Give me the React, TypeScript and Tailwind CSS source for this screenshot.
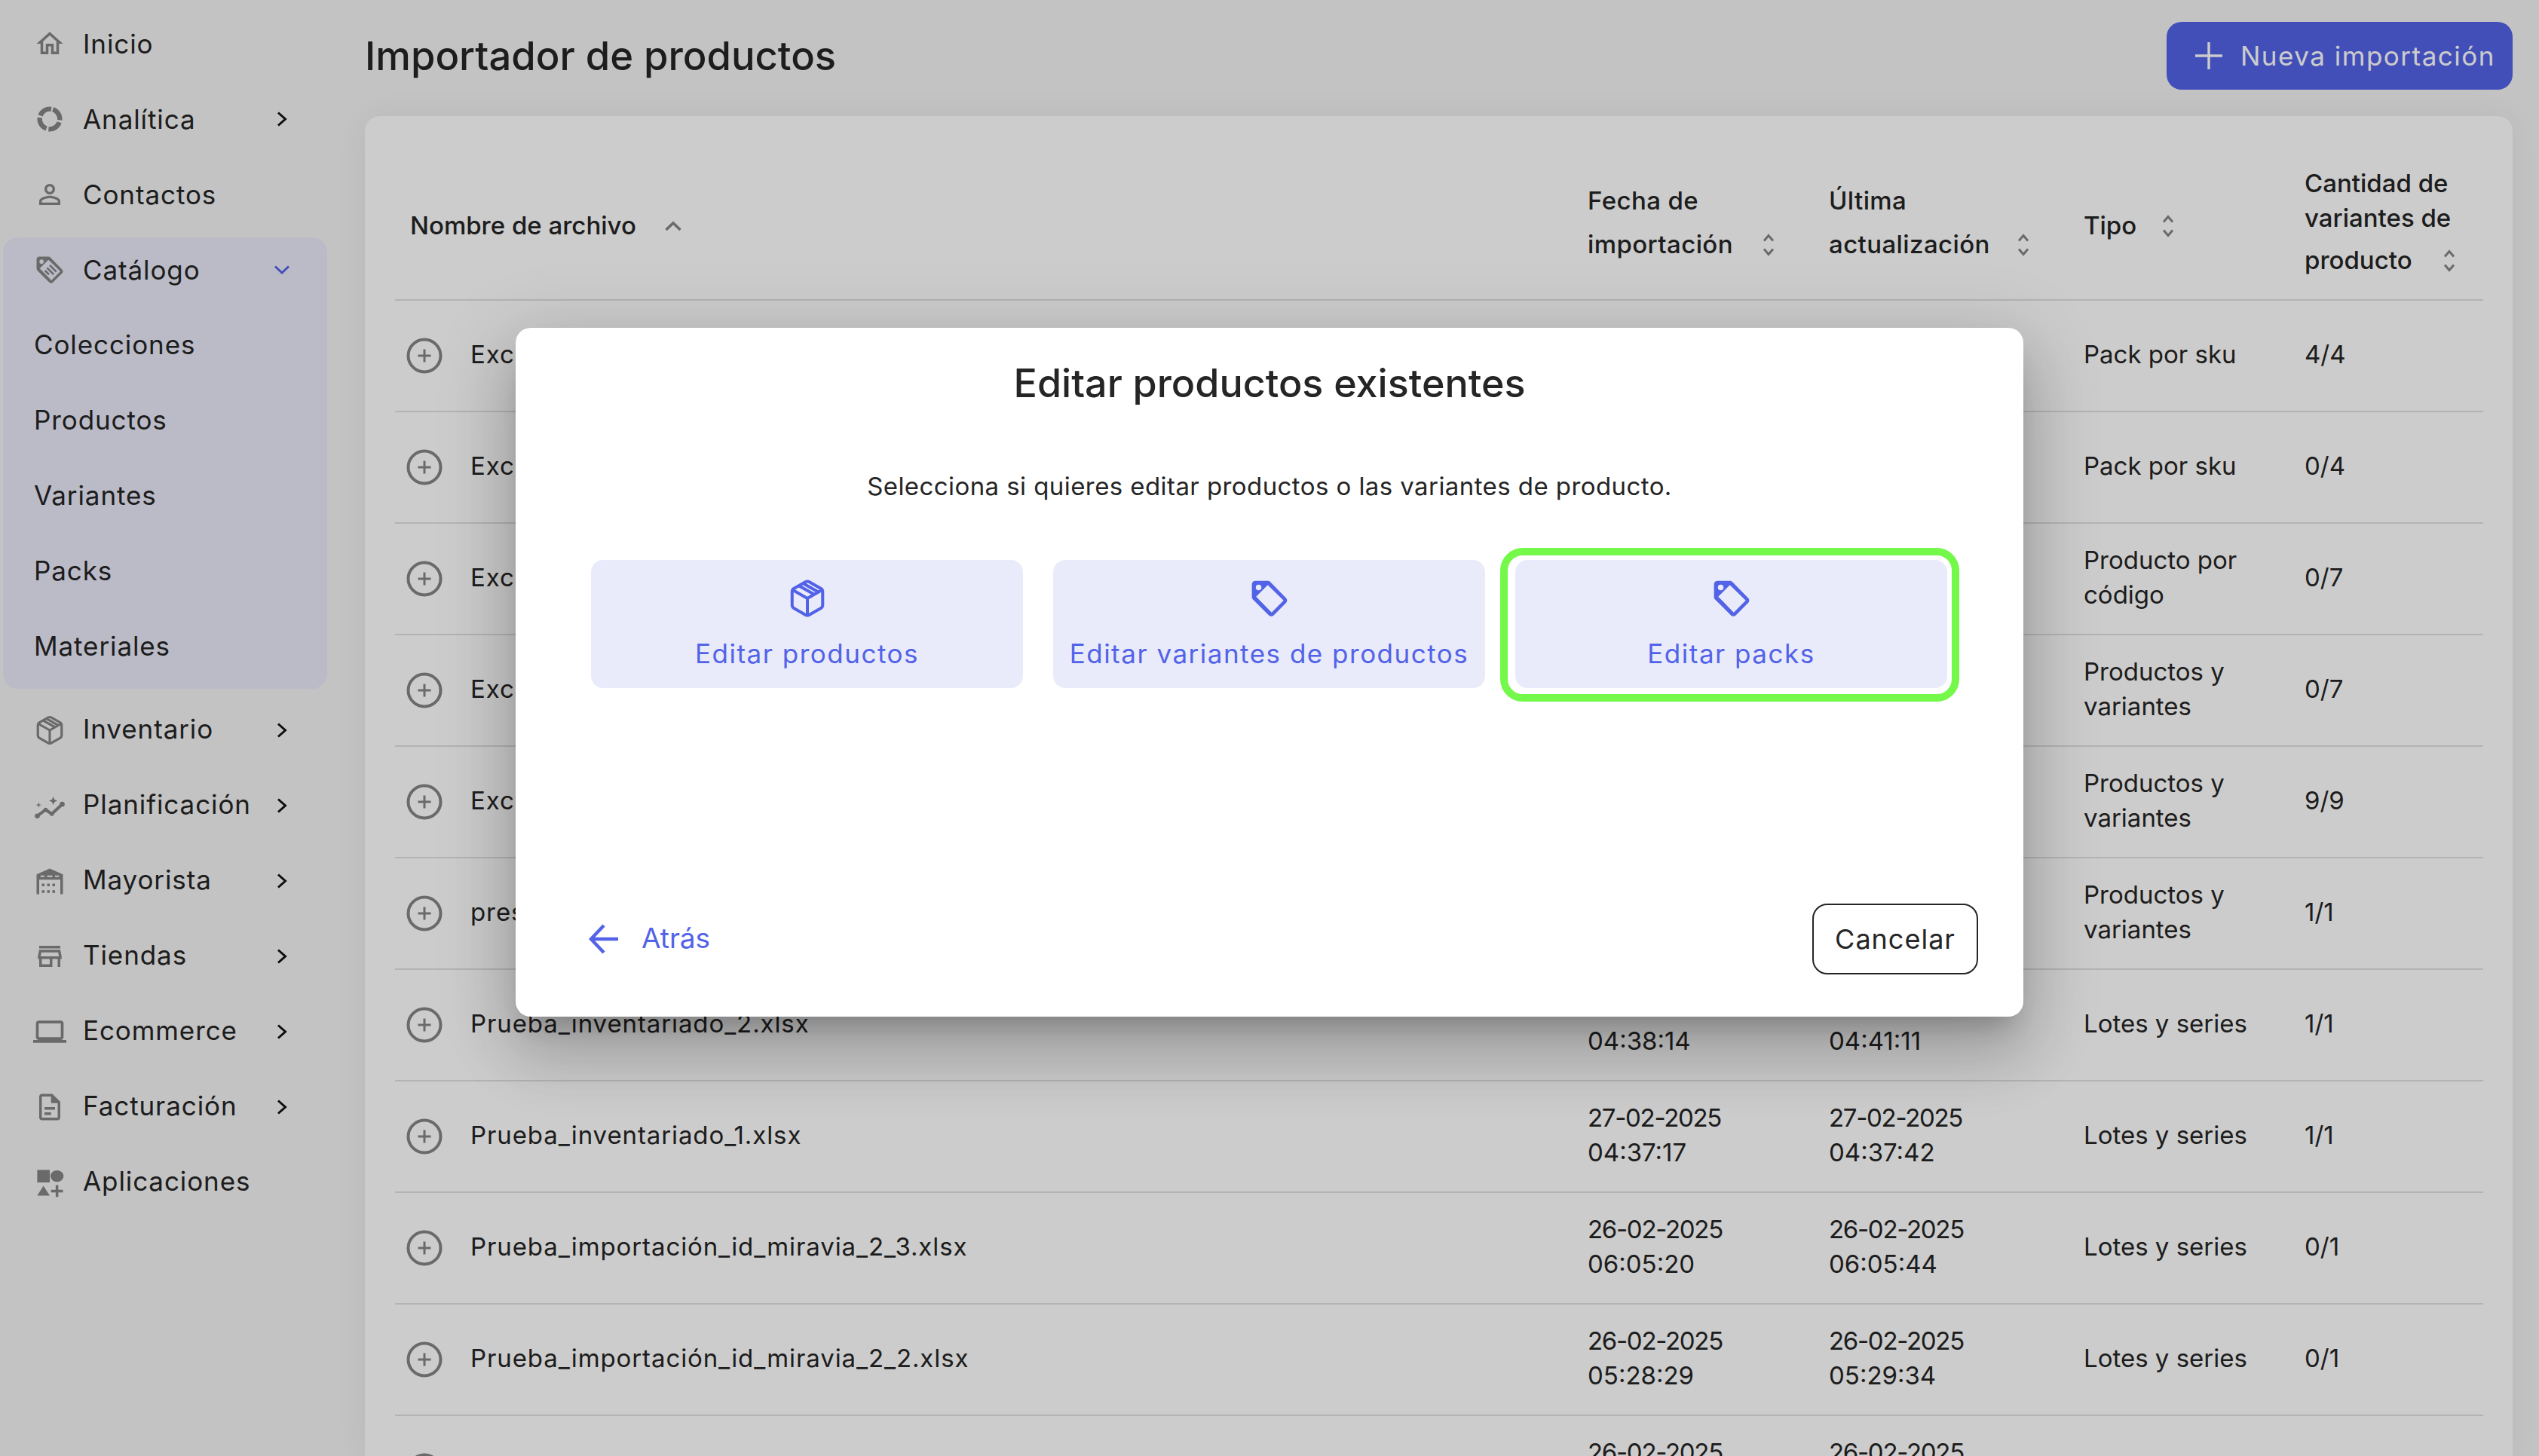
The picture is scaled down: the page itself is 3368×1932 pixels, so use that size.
import type { ReactNode } from 'react';

const Home = () => (
  <svg viewBox="0 0 24 24" className="w-[42px] h-[42px] fill-[#858585]"><path d="M12 5.69l5 4.5V18h-2v-6H9v6H7v-7.81l5-4.5M12 3L2 12h3v8h6v-6h2v6h6v-8h3L12 3z" /></svg>
);
const Analytics = () => (
  <svg viewBox="0 0 24 24" className="w-[40px] h-[40px] fill-none stroke-[#858585] stroke-[3.8]">
    <circle cx="12" cy="12" r="8" strokeDasharray="10.8 1.8" transform="rotate(-72 12 12)" />
  </svg>
);
const Person = () => (
  <svg viewBox="0 0 24 24" className="w-[42px] h-[42px] fill-[#858585]"><path d="M12 5.9c1.16 0 2.1.94 2.1 2.1s-.94 2.1-2.1 2.1S9.9 9.16 9.9 8s.94-2.1 2.1-2.1m0 9c2.97 0 6.1 1.46 6.1 2.1v1.1H5.9V17c0-.64 3.13-2.1 6.1-2.1M12 4C9.79 4 8 5.79 8 8s1.79 4 4 4 4-1.79 4-4-1.79-4-4-4zm0 9c-2.67 0-8 1.34-8 4v3h16v-3c0-2.66-5.33-4-8-4z" /></svg>
);
const tagPath = 'M4 2h7c.5 0 1 .2 1.4.6l9 9.2c.8.8.8 2 0 2.8l-7 7c-.8.8-2 .8-2.8 0l-9-9c-.4-.4-.6-.9-.6-1.4V4c0-1.1.9-2 2-2zM11 4.4 4.4 11l8.8 9 6.8-6.8zM5.8 4.2a1.6 1.6 0 1 0 0 3.2 1.6 1.6 0 0 0 0-3.2z';
const CatalogTag = () => (
  <svg viewBox="0 0 24 24" className="w-[42px] h-[42px]">
    <path d={tagPath} fillRule="evenodd" className="fill-[#858585]" />
    <path d="M10 10.5l5 5M12 8.5l5 5M8.4 12.6l3 3" className="stroke-[#858585] stroke-[1.5] fill-none" />
  </svg>
);
const Tag = () => (
  <svg viewBox="0 0 24 24" className="w-[56px] h-[56px]"><path d={tagPath} fillRule="evenodd" className="fill-[#5363e8]" /></svg>
);
const Box = ({ className }: { className: string }) => (
  <svg viewBox="0 0 24 24" className={className + ' fill-none'} strokeLinejoin="round">
    <path d="M11 21.73a2 2 0 0 0 2 0l7-4A2 2 0 0 0 21 16V8a2 2 0 0 0-1-1.73l-7-4a2 2 0 0 0-2 0l-7 4A2 2 0 0 0 3 8v8a2 2 0 0 0 1 1.73z" />
    <path d="M12 22V12" />
    <path d="M3.3 7 12 12l8.7-5" />
    <path d="m7 4.6 9 5.1" />
    <path d="m9.6 3.2 9 5.1" />
  </svg>
);
const Planning = () => (
  <svg viewBox="0 0 24 24" className="w-[44px] h-[44px]">
    <path d="M3 19.5 9 15l4.5 3 7.5-7" className="fill-none stroke-[#858585] stroke-[2.2]" />
    <circle cx="3" cy="19.5" r="1.8" className="fill-[#858585]" />
    <circle cx="9" cy="15" r="1.5" className="fill-[#858585]" />
    <circle cx="13.5" cy="18" r="1.5" className="fill-[#858585]" />
    <circle cx="21" cy="11" r="1.8" className="fill-[#858585]" />
    <path d="M14.5 5.5l.9 2.1 2.1.9-2.1.9-.9 2.1-.9-2.1-2.1-.9 2.1-.9zM4 9.5l.5 1.5 1.5.5-1.5.5L4 13.5 3.5 12 2 11.5l1.5-.5z" className="fill-[#858585]" />
  </svg>
);
const Warehouse = () => (
  <svg viewBox="0 0 24 24" className="w-[42px] h-[42px] fill-[#858585]">
    <path d="M12 2.5 22 7v15h-2V11H4v11H2V7z" />
    <path d="M5 7.8h3v1.2H5zM10 7.8h4v1.2h-4zM16 7.8h3v1.2h-3z" className="fill-[#f4f4f4]" />
    <path d="M6 14h2v2H6zM10 14h2v2h-2zM14 14h2v2h-2zM6 19h2v2H6zM10 19h2v2h-2zM14 19h2v2h-2z" />
  </svg>
);
const Store = () => (
  <svg viewBox="0 0 24 24" className="w-[42px] h-[42px] fill-[#858585]"><path d="M18.36 9l.6 3H5.04l.6-3h12.72M20 4H4v2h16V4zm0 3H4l-1 5v2h1v6h10v-6h4v6h2v-6h1v-2l-1-5zM6 18v-4h6v4H6z" /></svg>
);
const Laptop = () => (
  <svg viewBox="0 0 24 24" className="w-[46px] h-[46px] fill-[#858585]"><path d="M20 18c1.1 0 1.99-.9 1.99-2L22 6c0-1.1-.9-2-2-2H4c-1.1 0-2 .9-2 2v10c0 1.1.9 2 2 2H0v2h24v-2h-4zM4 6h16v10H4V6z" /></svg>
);
const Doc = () => (
  <svg viewBox="0 0 24 24" className="w-[42px] h-[42px] fill-[#858585]"><path d="M8 16h5v2H8zm0-4h8v2H8zm6-10H6c-1.1 0-2 .9-2 2v16c0 1.1.89 2 1.99 2H18c1.1 0 2-.9 2-2V8l-6-6zm4 18H6V4h7v5h5v11z" /></svg>
);
const Apps = () => (
  <svg viewBox="0 0 24 24" className="w-[42px] h-[42px] fill-[#858585]">
    <path d="M2.5 2.5h9.5v9.5H2.5z" />
    <ellipse cx="17.5" cy="7.2" rx="5" ry="4.4" />
    <path d="M7.2 14.5l4.8 7.5H2.5z" />
    <path d="M16.5 14h2v3.5H22v2h-3.5V23h-2v-3.5H13v-2h3.5z" />
  </svg>
);
const ChevronRight = () => (
  <svg viewBox="0 0 14 22" className="w-[14px] h-[22px] fill-none stroke-[#111] stroke-[3]"><path d="M2 2.5 11.5 11 2 19.5" /></svg>
);
const ChevronDown = () => (
  <svg viewBox="0 0 22 14" className="w-[22px] h-[14px] fill-none stroke-[#5363e8] stroke-[3]"><path d="M2 2.5 11 11l9-8.5" /></svg>
);
const ChevronUp = () => (
  <svg viewBox="0 0 24 14" className="w-[24px] h-[14px] fill-none stroke-[#858585] stroke-[3.6]"><path d="M2.5 12 12 3l9.5 9" /></svg>
);
const SortIcon = () => (
  <svg viewBox="0 0 16 30" className="w-[16px] h-[30px] shrink-0 fill-none stroke-[#858585] stroke-[3]">
    <path d="M2 9.5 8 2.5l6 7" />
    <path d="M2 20.5l6 7 6-7" />
  </svg>
);
const PlusCircle = () => (
  <svg viewBox="0 0 48 48" className="w-[48px] h-[48px] shrink-0 fill-none stroke-[#858585]">
    <circle cx="24" cy="24" r="21.5" className="stroke-[4]" />
    <path d="M24 15.5v17M15.5 24h17" className="stroke-[3]" />
  </svg>
);

type NavItem = { label: string; icon: ReactNode; more?: boolean };

const topItems: NavItem[] = [
  { label: 'Inicio', icon: <Home /> },
  { label: 'Analítica', icon: <Analytics />, more: true },
  { label: 'Contactos', icon: <Person /> },
];
const bottomItems: NavItem[] = [
  { label: 'Inventario', icon: <Box className="w-[42px] h-[42px] stroke-[#858585] stroke-[1.8]" />, more: true },
  { label: 'Planificación', icon: <Planning />, more: true },
  { label: 'Mayorista', icon: <Warehouse />, more: true },
  { label: 'Tiendas', icon: <Store />, more: true },
  { label: 'Ecommerce', icon: <Laptop />, more: true },
  { label: 'Facturación', icon: <Doc />, more: true },
  { label: 'Aplicaciones', icon: <Apps /> },
];
const subItems = ['Colecciones', 'Productos', 'Variantes', 'Packs', 'Materiales'];

const rows = [
  ['Excel_productos_4.xlsx', '04-03-2025', '05:12:10', '04-03-2025', '05:13:02', ['Pack por sku'], '4/4'],
  ['Excel_productos_3.xlsx', '04-03-2025', '05:02:44', '04-03-2025', '05:03:18', ['Pack por sku'], '0/4'],
  ['Excel_productos_2.xlsx', '03-03-2025', '06:21:30', '03-03-2025', '06:22:01', ['Producto por', 'código'], '0/7'],
  ['Excel_productos_1.xlsx', '03-03-2025', '06:10:15', '03-03-2025', '06:10:49', ['Productos y', 'variantes'], '0/7'],
  ['Excel_variantes.xlsx', '28-02-2025', '04:55:12', '28-02-2025', '04:56:20', ['Productos y', 'variantes'], '9/9'],
  ['prestashop_productos.xlsx', '27-02-2025', '04:44:08', '27-02-2025', '04:45:36', ['Productos y', 'variantes'], '1/1'],
  ['Prueba_inventariado_2.xlsx', '27-02-2025', '04:38:14', '27-02-2025', '04:41:11', ['Lotes y series'], '1/1'],
  ['Prueba_inventariado_1.xlsx', '27-02-2025', '04:37:17', '27-02-2025', '04:37:42', ['Lotes y series'], '1/1'],
  ['Prueba_importación_id_miravia_2_3.xlsx', '26-02-2025', '06:05:20', '26-02-2025', '06:05:44', ['Lotes y series'], '0/1'],
  ['Prueba_importación_id_miravia_2_2.xlsx', '26-02-2025', '05:28:29', '26-02-2025', '05:29:34', ['Lotes y series'], '0/1'],
  ['Prueba_importación_id_miravia_2_1.xlsx', '26-02-2025', '05:10:02', '26-02-2025', '05:11:40', ['Lotes y series'], '0/1'],
] as const;

const NavRow = ({ item, top }: { item: NavItem; top?: boolean }) => (
  <div className="h-[100px] flex items-center pl-[44px] pr-[98px] text-[35px] tracking-[0.9px] text-[#252525]">
    <span className="w-[44px] flex justify-center shrink-0">{item.icon}</span>
    <span className={top ? 'ml-[22px]' : 'ml-[22px] mb-[3px]'}>{item.label}</span>
    {item.more && <span className="ml-auto w-[24px] flex justify-center"><ChevronRight /></span>}
  </div>
);

const Sidebar = () => (
  <aside className="w-[484px] shrink-0">
    <div className="pt-[8px]">
      {topItems.map((item) => <NavRow key={item.label} item={item} top />)}
    </div>
    <div className="mt-[7px] mb-[5px] ml-[4px] w-[430px] h-[599px] rounded-[20px] bg-[#eaeaf9] text-[35px] tracking-[0.9px] text-[#252525]">
      <div className="h-[86px] flex items-center pl-[40px] pr-[48px]">
        <span className="w-[44px] flex justify-center shrink-0"><CatalogTag /></span>
        <span className="ml-[22px]">Catálogo</span>
        <span className="ml-auto w-[24px] flex justify-center"><ChevronDown /></span>
      </div>
      <div className="pt-[8px]">
        {subItems.map((label) => (
          <div key={label} className="h-[100px] flex items-center pl-[41px] pb-[3px]">{label}</div>
        ))}
      </div>
    </div>
    {bottomItems.map((item) => <NavRow key={item.label} item={item} />)}
  </aside>
);

const gridCols = 'grid grid-cols-[1561px_320px_338px_293px_258px]';

const TableHeader = () => (
  <div className={`${gridCols} h-[245px] pt-[40px] border-b-2 border-[#e0e0e0] text-[33px] font-medium text-[#252525]`}>
    <div className="pl-[20px] flex items-center mt-[9px] gap-[37px]">
      Nombre de archivo <ChevronUp />
    </div>
    <div className="pl-[21px] flex flex-col justify-center tracking-[0.4px]">
      <div className="h-[58px] flex items-center">Fecha de</div>
      <div className="h-[58px] flex items-center justify-between w-[248px]">importación <SortIcon /></div>
    </div>
    <div className="pl-[21px] flex flex-col justify-center tracking-[0.4px]">
      <div className="h-[58px] flex items-center">Última</div>
      <div className="h-[58px] flex items-center justify-between w-[266px]">actualización <SortIcon /></div>
    </div>
    <div className="pl-[21px] flex items-center mt-[9px] gap-[34px]">Tipo <SortIcon /></div>
    <div className="pl-[21px] flex flex-col justify-center">
      <div className="h-[46px] flex items-center">Cantidad de</div>
      <div className="h-[46px] flex items-center">variantes de</div>
      <div className="h-[58px] flex items-center justify-between w-[200px] translate-y-[4px]">producto <SortIcon /></div>
    </div>
  </div>
);

const TableRow = ({ row }: { row: (typeof rows)[number] }) => (
  <div className={`${gridCols} h-[148px] border-b-2 border-[#e0e0e0] text-[33px] leading-[46px] text-[#252525] items-center`}>
    <div className="pl-[15px] flex items-center gap-[37px]">
      <PlusCircle />
      <span className="mb-[4px] tracking-[0.9px]">{row[0]}</span>
    </div>
    <div className="pl-[21px] mb-[4px]"><div className="tracking-[-1.3px]">{row[1]}</div><div>{row[2]}</div></div>
    <div className="pl-[21px] mb-[4px]"><div className="tracking-[-1.3px]">{row[3]}</div><div>{row[4]}</div></div>
    <div className="pl-[21px] mb-[4px]">{row[5].map((line) => <div key={line}>{line}</div>)}</div>
    <div className="pl-[21px] mb-[4px]">{row[6]}</div>
  </div>
);

const OptionCard = ({ icon, label }: { icon: ReactNode; label: string }) => (
  <div className="w-[573px] h-[170px] rounded-[16px] bg-[#e9ebfb] flex flex-col items-center text-[#5363e8] text-[35px] tracking-[1.5px] pt-[23px]">
    <div className="h-[56px] flex items-center justify-center">{icon}</div>
    <div className="mt-[22px] leading-[46px]">{label}</div>
  </div>
);

const Modal = () => (
  <div className="absolute left-[684px] top-[435px] w-[2000px] h-[914px] rounded-[20px] bg-white pl-[97px] pr-[60px] shadow-[0_24px_32px_-15px_rgba(0,0,0,0.2),0_52px_82px_6px_rgba(0,0,0,0.14),0_19px_99px_17px_rgba(0,0,0,0.12)] flex flex-col">
    <h2 className="mt-[47px] h-[54px] leading-[54px] text-center text-[52px] font-medium text-[#252525] -ml-[37px]">Editar productos existentes</h2>
    <p className="mt-[86px] h-[46px] leading-[46px] text-center text-[33px] tracking-[0.42px] text-[#252525] -ml-[37px]">Selecciona si quieres editar productos o las variantes de producto.</p>
    <div className="mt-[75px] ml-[3px] flex gap-[40px]">
      <OptionCard icon={<Box className="w-[54px] h-[54px] stroke-[#5363e8] stroke-[1.8]" />} label="Editar productos" />
      <OptionCard icon={<Tag />} label="Editar variantes de productos" />
      <OptionCard icon={<Tag />} label="Editar packs" />
    </div>
    <div className="mt-auto mb-[56px] flex items-center justify-between">
      <div className="flex items-center gap-[30px] text-[37px] text-[#5363e8]">
        <svg viewBox="0 0 40 40" className="w-[40px] h-[40px] fill-none stroke-[#5363e8] stroke-[4.5]"><path d="M20 2 3 20l17 18M3 20h36" /></svg>
        <span className="mb-[3px]">Atrás</span>
      </div>
      <button className="w-[220px] h-[94px] rounded-[20px] border-2 border-[#252525] text-[36px] tracking-[1px] text-[#252525]">Cancelar</button>
    </div>
    {/* Green highlight around the last option */}
    <div className="absolute left-[1306px] top-[292px] w-[609px] h-[204px] rounded-[30px] border-[10px] border-[#74f84a]"></div>
  </div>
);

export default function App() {
  return (
    <div className="relative w-[3368px] h-[1932px] overflow-hidden bg-[#f4f4f4] flex font-[Inter,sans-serif]">
      <Sidebar />
      <main className="flex-1 min-w-0">
        <header className="h-[154px] pt-[29px] pr-[35px]">
          <div className="h-[90px] flex items-center justify-between">
            <h1 className="text-[52.5px] font-medium text-[#252525]">Importador de productos</h1>
            <button className="w-[459px] h-[90px] rounded-[20px] bg-[#5363e8] text-white text-[35px] tracking-[1.5px] flex items-center pl-[38px] gap-[24px]">
              <svg viewBox="0 0 36 36" className="w-[36px] h-[36px] fill-none stroke-white stroke-[3.4]"><path d="M18 0v36M0 18h36" /></svg>
              Nueva importación
            </button>
          </div>
        </header>
        <section className="w-[2849px] h-[1778px] rounded-t-[20px] bg-white pl-[40px] pr-[39px] shadow-[0_0_40px_rgba(0,0,0,0.06)] overflow-hidden">
          <TableHeader />
          {rows.map((row) => <TableRow key={row[0]} row={row} />)}
        </section>
      </main>
      <div className="absolute inset-0 bg-black/20"></div>
      <Modal />
    </div>
  );
}
